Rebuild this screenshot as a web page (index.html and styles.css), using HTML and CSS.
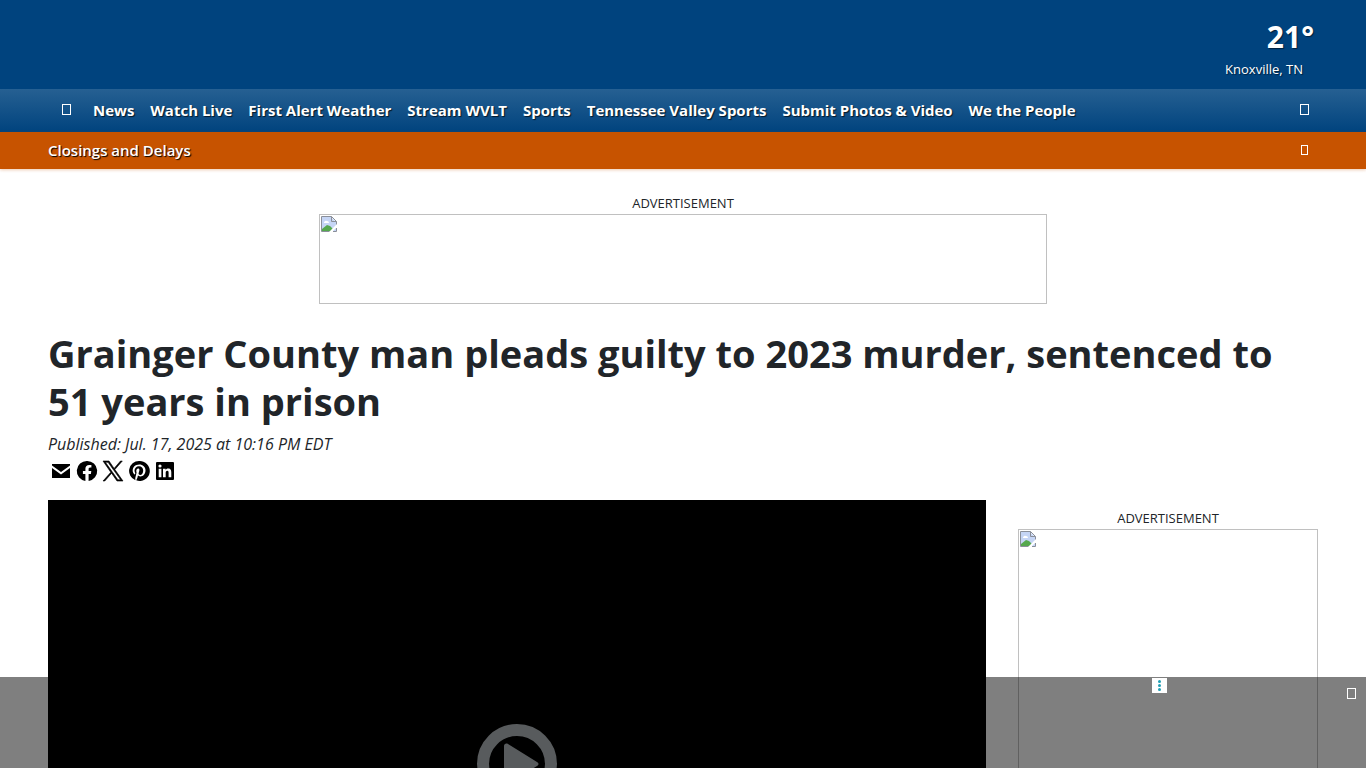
FILE: index.html
```html
<!DOCTYPE html>
<html lang="en">
<head>
    <meta charset="UTF-8">
    <meta name="viewport" content="width=device-width, initial-scale=1.0">
    <title>Grainger County man pleads guilty to 2023 murder, sentenced to 51 years in prison</title>
    <link rel="stylesheet" href="styles.css">
</head>
<body>
    <header>
        <div class="masthead">
            <a class="weather" href="#">
                <span class="temp">21°</span>
                <span class="city">Knoxville, TN</span>
            </a>
        </div>
        <nav class="main-nav">
            <a class="home" href="#" aria-label="Home"><span class="glyph"></span></a>
            <a href="#">News</a>
            <a href="#">Watch Live</a>
            <a href="#">First Alert Weather</a>
            <a href="#">Stream WVLT</a>
            <a href="#">Sports</a>
            <a href="#">Tennessee Valley Sports</a>
            <a href="#">Submit Photos &amp; Video</a>
            <a href="#">We the People</a>
            <button class="icon-button" type="button" aria-label="Search"><span class="glyph"></span></button>
        </nav>
        <div class="alert-bar">
            <a href="#">Closings and Delays</a>
            <button class="icon-button" type="button" aria-label="Close alert"><span class="glyph small"></span></button>
        </div>
    </header>

    <main class="container">
        <div class="ad">
            <div class="ad-label">ADVERTISEMENT</div>
            <div class="ad-box leaderboard">
                <svg class="broken" viewBox="0 0 16 16" aria-hidden="true">
                    <path fill="#c5d5f5" d="M1 1h9l5 5v9H1z"/>
                    <path fill="#fff" d="M3 6.500a2 2 0 0 1 3-1.500 2 2 0 0 1 2 2H3z"/>
                    <path fill="#55a84d" d="M1 15v-2l5-4 3 1 3 3-1 2z"/>
                    <path fill="#fff" d="M8 16l8-8v3l-5 5zM11 0h5v5z"/>
                    <path fill="none" stroke="#8a8f99" d="M.500 15.500V.500h10l5 5v3M10.500.500v5h5M.500 15.500h8M12 15.500h3.500V12"/>
                </svg>
            </div>
        </div>

        <h1 class="headline">Grainger County man pleads guilty to 2023 murder, sentenced to 51 years in prison</h1>
        <div class="published">Published: Jul. 17, 2025 at 10:16 PM EDT</div>
        <div class="share">
            <a href="#" aria-label="Email this link">
                <svg viewBox="0 0 24 24"><path d="M3 5h18v1.500l-9 6.500-9-6.500zM3 9l9 6.500L21 9v10H3z"/></svg>
            </a>
            <a href="#" aria-label="Share on Facebook">
                <svg viewBox="0 0 24 24"><path d="M12 2a10 10 0 0 0-1.600 19.900v-7H7.900V12h2.500V9.800c0-2.500 1.500-3.900 3.800-3.900 1.100 0 2.200.2 2.200.2v2.500h-1.200c-1.200 0-1.600.8-1.600 1.500V12h2.700l-.4 2.900h-2.300v7A10 10 0 0 0 12 2z"/></svg>
            </a>
            <a href="#" aria-label="Share on X">
                <svg viewBox="0 0 24 24"><path stroke="#000" stroke-width=".6" d="M13.900 10.500 21.300 2h-1.800l-6.400 7.400L8 2H2l7.800 11.300L2 22h1.800l6.800-7.800L16 22h6zm-2.400 2.700-.8-1.100L4.400 3.300h2.700l5.100 7.200.8 1.100 6.600 9.200h-2.700z"/></svg>
            </a>
            <a href="#" aria-label="Share on Pinterest">
                <svg viewBox="0 0 24 24"><path d="M12 2a10 10 0 0 0-3.600 19.300c-.1-.8-.2-2 0-2.900l1.200-5s-.3-.6-.3-1.500c0-1.400.8-2.400 1.800-2.400.9 0 1.300.6 1.300 1.400 0 .9-.5 2.100-.8 3.300-.2 1 .5 1.800 1.500 1.800 1.800 0 3.100-1.900 3.100-4.600 0-2.400-1.700-4.100-4.200-4.100a4.300 4.300 0 0 0-4.500 4.300c0 .9.300 1.800.7 2.300l.1.300-.3 1.100c0 .2-.2.200-.3.100-1.300-.6-2-2.400-2-3.900 0-3.200 2.300-6.100 6.600-6.100 3.500 0 6.200 2.500 6.200 5.800 0 3.500-2.200 6.200-5.200 6.200-1 0-2-.5-2.300-1.100l-.6 2.400c-.2.900-.8 1.900-1.200 2.600A10 10 0 1 0 12 2z"/></svg>
            </a>
            <a href="#" aria-label="Share on LinkedIn">
                <svg viewBox="0 0 24 24"><path fill-rule="evenodd" d="M4 3h16a1 1 0 0 1 1 1v16a1 1 0 0 1-1 1H4a1 1 0 0 1-1-1V4a1 1 0 0 1 1-1zm1.700 6.700v8.600h2.700V9.700zM7 5.400a1.600 1.600 0 1 0 0 3.200 1.600 1.600 0 0 0 0-3.200zm3 4.300v8.600h2.700V14c0-1.200.3-2.200 1.600-2.200s1.300 1.200 1.300 2.300v4.200h2.700v-4.700c0-2.300-.5-4.100-3.200-4.100-1.300 0-2.100.7-2.500 1.400V9.700z"/></svg>
            </a>
        </div>

        <div class="columns">
            <div class="video">
                <button class="play" type="button" aria-label="Play video">
                    <svg viewBox="0 0 80 80">
                        <circle cx="40" cy="40" r="34" fill="none" stroke="#b0b6ba" stroke-width="12"/>
                        <path fill="#b0b6ba" d="M27 22c0-2 2-3 4-2l29 18c2 1 2 3 0 4L31 60c-2 1-4 0-4-2z"/>
                    </svg>
                </button>
            </div>
            <aside class="ad">
                <div class="ad-label">ADVERTISEMENT</div>
                <div class="ad-box rectangle">
                    <svg class="broken" viewBox="0 0 16 16" aria-hidden="true">
                        <path fill="#c5d5f5" d="M1 1h9l5 5v9H1z"/>
                        <path fill="#fff" d="M3 6.500a2 2 0 0 1 3-1.500 2 2 0 0 1 2 2H3z"/>
                        <path fill="#55a84d" d="M1 15v-2l5-4 3 1 3 3-1 2z"/>
                        <path fill="#fff" d="M8 16l8-8v3l-5 5zM11 0h5v5z"/>
                        <path fill="none" stroke="#8a8f99" d="M.500 15.500V.500h10l5 5v3M10.500.500v5h5M.500 15.500h8M12 15.500h3.500V12"/>
                    </svg>
                </div>
            </aside>
        </div>
    </main>

    <div class="sticky-ad">
        <div class="sticky-slot">
            <button class="ad-options" type="button" aria-label="Ad options">
                <svg viewBox="0 0 15 15" fill="#1f9fb5"><circle cx="7.500" cy="3.500" r="1.500"/><circle cx="7.500" cy="7.500" r="1.500"/><circle cx="7.500" cy="11.500" r="1.500"/></svg>
            </button>
        </div>
        <button class="close-ad" type="button" aria-label="Close ad"><span class="glyph"></span></button>
    </div>
</body>
</html>
```
FILE: styles.css
```css
* {
    box-sizing: border-box;
}

body {
    margin: 0;
    font-family: "Segoe UI", "Open Sans", "Noto Sans", sans-serif;
    font-size: 16px;
    line-height: 24px;
    color: #212529;
    background: #fff;
}

a {
    color: inherit;
    text-decoration: none;
}

button {
    border: 0;
    padding: 0;
    background: none;
    color: inherit;
    font: inherit;
    cursor: pointer;
}

svg {
    display: block;
}

/* Header */
.masthead {
    display: flex;
    justify-content: flex-end;
    height: 89px;
    padding: 19px 52px 0 48px;
    background: #00437e;
    color: #fff;
}

.weather {
    display: flex;
    flex-direction: column;
    align-items: flex-end;
    text-shadow: 1px 1px 1px rgba(0, 0, 0, 0.5);
}

.temp {
    font-size: 30px;
    font-weight: 700;
    line-height: 36px;
}

.city {
    padding-right: 11px;
    font-size: 13px;
    line-height: 28px;
}

.main-nav {
    display: flex;
    align-items: center;
    gap: 16px;
    height: 43px;
    padding: 0 57px 2px 62px;
    background: linear-gradient(#266092, #00437e);
    color: #fff;
    font-size: 15px;
    font-weight: 700;
    white-space: nowrap;
    text-shadow: 1px 1px 1px rgba(0, 0, 0, 0.7);
}

.home {
    margin-right: 6px;
}

.glyph {
    display: block;
    width: 9px;
    height: 11px;
    border: 1px solid #fff;
}

.glyph.small {
    width: 7px;
    height: 10px;
}

.icon-button {
    margin-left: auto;
}

.alert-bar {
    display: flex;
    align-items: center;
    height: 37px;
    padding: 0 58px 2px 48px;
    background: #c75300;
    color: #fff;
    font-size: 15px;
    font-weight: 600;
    text-shadow: 1px 1px 1px #000;
    box-shadow: 0 1px 3px rgba(199, 83, 0, 0.3);
}

/* Article */
.container {
    padding: 24px 48px 0;
}

.ad {
    display: flex;
    flex-direction: column;
    align-items: center;
}

.ad-label {
    font-size: 13px;
    line-height: 21px;
}

.ad-box {
    padding: 1px;
    border: 1px solid #c0c0c0;
}

.broken {
    width: 16px;
    height: 16px;
}

.leaderboard {
    width: 728px;
    height: 90px;
}

.rectangle {
    width: 300px;
    height: 250px;
}

.headline {
    margin: 25px 0 7px;
    font-size: 38px;
    font-weight: 700;
    line-height: 48px;
}

.published {
    font-size: 16px;
    font-style: italic;
    line-height: 24px;
    margin-bottom: 3px;
}

.share {
    display: flex;
    gap: 2px;
    padding-left: 1px;
}

.share svg {
    width: 24px;
    height: 24px;
    fill: #000;
}

.columns {
    display: grid;
    grid-template-columns: 1fr 300px;
    align-items: start;
    gap: 32px;
    margin-top: 17px;
}

.columns .ad {
    padding-top: 8px;
}

.video {
    display: flex;
    align-items: center;
    justify-content: center;
    aspect-ratio: 16 / 9;
    background: #000;
}

.play svg {
    width: 80px;
    height: 80px;
}

/* Ad bar over the bottom of the page */
.sticky-ad {
    position: fixed;
    right: 0;
    bottom: 0;
    left: 0;
    height: 91px;
    background: rgba(0, 0, 0, 0.5);
}

.sticky-slot {
    display: flex;
    justify-content: flex-end;
    max-width: 968px;
    margin: 0 auto;
    padding-top: 1px;
}

.ad-options {
    background: #fff;
}

.ad-options svg {
    width: 15px;
    height: 15px;
}

.close-ad {
    position: absolute;
    top: 11px;
    right: 10px;
}
```
